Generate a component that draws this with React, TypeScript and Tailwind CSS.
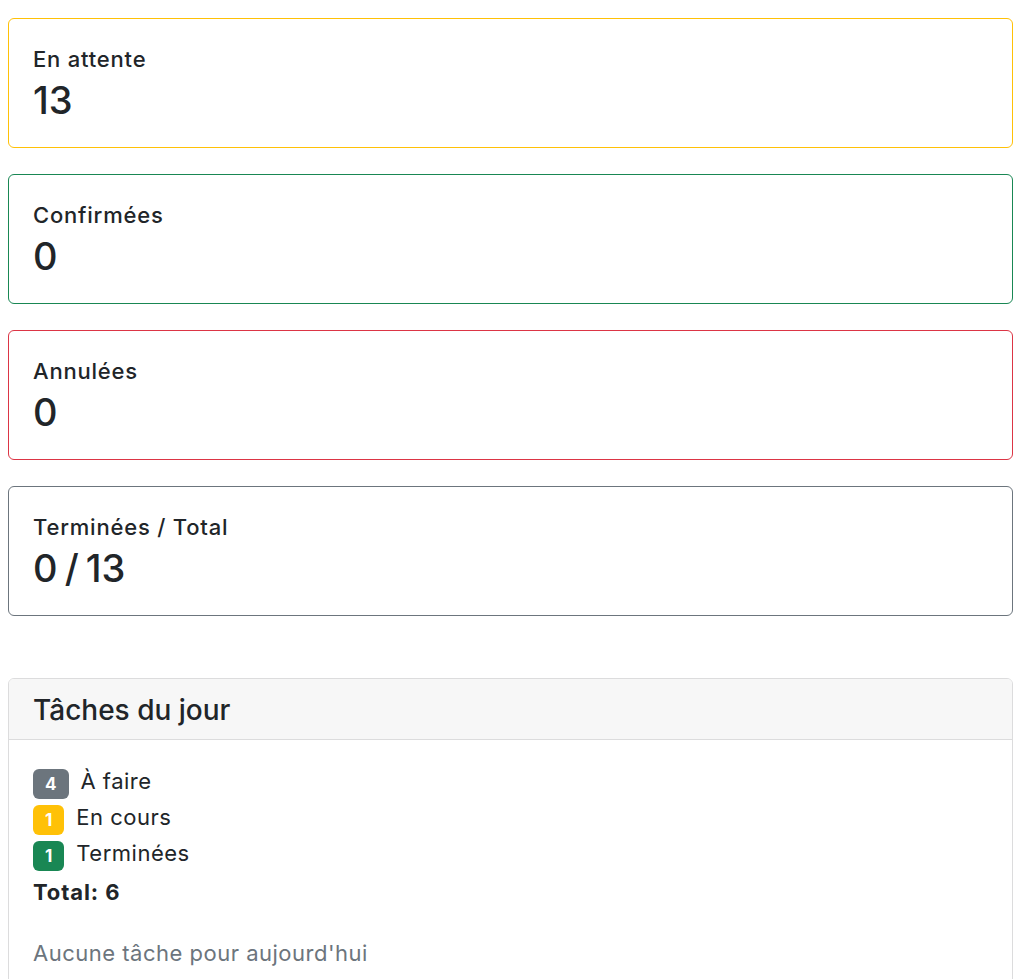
import React from "react";

const stats = [
  { label: "En attente", value: "13", border: "border-[#ffc107]" },
  { label: "Confirmées", value: "0", border: "border-[#198754]" },
  { label: "Annulées", value: "0", border: "border-[#dc3545]" },
  { label: "Terminées / Total", value: "0 / 13", border: "border-[#6c757d]" },
];

const tasks = [
  { n: "4", label: "À faire", bg: "bg-[#6c757d]" },
  { n: "1", label: "En cours", bg: "bg-[#ffc107]" },
  { n: "1", label: "Terminées", bg: "bg-[#198754]" },
];

export default function App() {
  return (
    <div
      className="min-h-[979px] bg-white text-[#212529] pl-[8px] pr-[11px] pt-[18px]"
      style={{ fontFamily: "Inter, 'Noto Sans', sans-serif" }}
    >
      <div className="flex flex-col gap-[26px]">
        {stats.map((s) => (
          <div
            key={s.label}
            className={`h-[130px] border ${s.border} rounded-[6px] px-6 pt-[27px] flex flex-col`}
          >
            <div className="text-[22px] leading-[26px] font-medium tracking-[0.8px]">{s.label}</div>
            <div className="mt-[6px] text-[38px] leading-[44px] font-medium [word-spacing:-3px]">
              {s.value}
            </div>
          </div>
        ))}
      </div>

      <div className="mt-[62px] border border-[#dcdcdd] rounded-[6px] overflow-hidden">
        <div className="bg-[#f7f7f7] border-b border-[#dcdcdd] px-6 pt-[14px] pb-[12px]">
          <div className="text-[28px] leading-[34px] font-medium">Tâches du jour</div>
        </div>
        <div className="px-6 pt-[26px] pb-6 text-[22px] tracking-[0.5px]">
          {tasks.map((t) => (
            <div key={t.label} className="flex items-center h-[36px] gap-[12px]">
              <span
                className={`${t.bg} text-white font-bold text-[17px] tracking-normal leading-[30px] h-[30px] px-[12px] rounded-[6px]`}
              >
                {t.n}
              </span>
              <span className="leading-[26px] pb-[6px]">{t.label}</span>
            </div>
          ))}
          <div className="leading-[36px] font-bold tracking-[0.9px]">Total: 6</div>
          <div className="mt-[28px] leading-[30px] text-[#6c757d]">
            Aucune tâche pour aujourd'hui
          </div>
        </div>
      </div>
    </div>
  );
}
